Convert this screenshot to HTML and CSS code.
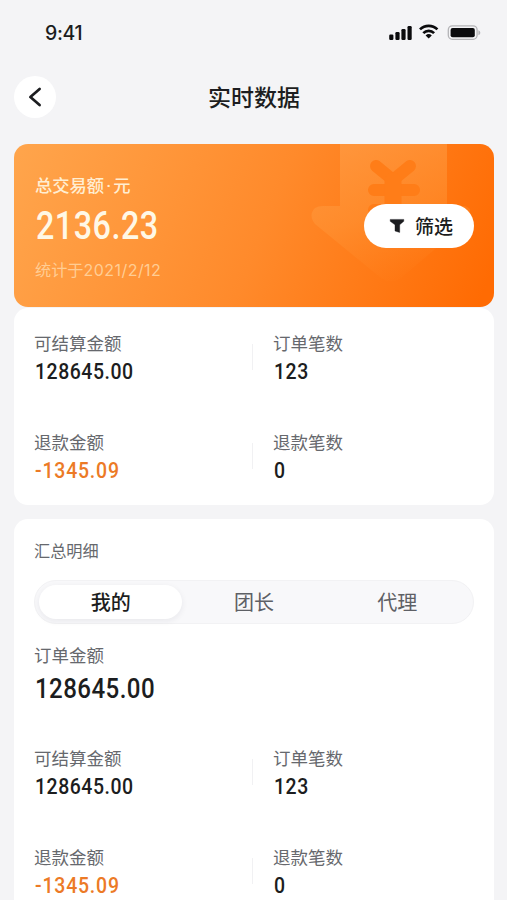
FILE: index.html
```html
<!DOCTYPE html>
<html lang="zh-CN">
<head>
<meta charset="utf-8">
<title>实时数据</title>
<link rel="stylesheet" href="styles.css">
</head>
<body>
<div class="screen">
  <div class="status">
    <span class="clock">9:41</span>
    <svg class="status-icons" width="92" height="20" viewBox="0 0 92 20">
      <rect x="0.2" y="11.5" width="4.2" height="5.5" rx="1.2"/>
      <rect x="6.4" y="9" width="4.2" height="8" rx="1.2"/>
      <rect x="12.4" y="6" width="4.2" height="11" rx="1.2"/>
      <rect x="18.5" y="3" width="4.2" height="14" rx="1.2"/>
      <g fill="none" stroke="#0b0b0d" stroke-width="2.7">
        <path d="M31 6.4a12.4 12.4 0 0 1 17.4 0"/>
        <path d="M34.3 10.1a7.7 7.7 0 0 1 10.8 0"/>
      </g>
      <path d="M39.7 15.4l-3.1-2.9a4.6 4.6 0 0 1 6.2 0z"/>
      <rect x="59.3" y="2.9" width="28.8" height="13.4" rx="4" fill="none" stroke="#b4b4b7" stroke-width="1.3"/>
      <rect x="61.6" y="5" width="24.2" height="9.3" rx="2"/>
      <path d="M89.4 7.2c2.5.9 2.5 4.1 0 5z" fill="#b4b4b7"/>
    </svg>
  </div>
  <header class="nav">
    <button class="back" aria-label="返回">
      <svg width="42" height="42" viewBox="0 0 42 42"><path d="M25.6 13l-9.2 8 9.2 8" fill="none" stroke="#1c1d20" stroke-width="2.7" stroke-linecap="round" stroke-linejoin="round"/></svg>
    </button>
    <h1>实时数据</h1>
  </header>

  <section class="hero">
    <svg class="hero-art" width="160" height="150" viewBox="0 0 160 150">
      <defs>
        <linearGradient id="arrow" x1="0.3" y1="0" x2="0.65" y2="1">
          <stop offset="0" stop-color="#ffa04a" stop-opacity=".6"/>
          <stop offset=".5" stop-color="#ff9638" stop-opacity=".5"/>
          <stop offset="1" stop-color="#ff8a28" stop-opacity="0"/>
        </linearGradient>
      </defs>
      <path fill="url(#arrow)" d="M30 0H137V62H155Q166 66 158 77L91 134Q81 141 71 134L5 80Q-2 71 5 64Q8 62 13 62H30Z"/>
      <g fill="none" stroke="#ff7d18" stroke-width="12" stroke-linecap="round">
        <path d="M66 22L83 36L100 22M64 46H104M64 66H104"/>
        <path d="M83 37V82" stroke-width="17"/>
      </g>
    </svg>
    <div class="hero-info">
      <div class="hero-label">总交易额<span>·</span>元</div>
      <div class="hero-amount num">2136.23</div>
      <div class="hero-date">统计于<span>2021/2/12</span></div>
    </div>
    <button class="filter">
      <svg width="16" height="16" viewBox="0 0 16 16"><path d="M1.2 1.4h13.6v1.9L10.7 6.8v7.6L6 13V6.8L1.2 3.3z" fill="#1c1d20" stroke="#1c1d20" stroke-width=".4" stroke-linejoin="round"/></svg>
      <span>筛选</span>
    </button>
  </section>

  <section class="card totals">
    <div class="row">
      <div class="cell"><div class="label">可结算金额</div><div class="value num">128645.00</div></div>
      <div class="cell split"><div class="label">订单笔数</div><div class="value num">123</div></div>
    </div>
    <div class="row">
      <div class="cell"><div class="label">退款金额</div><div class="value num refund">-1345.09</div></div>
      <div class="cell split"><div class="label">退款笔数</div><div class="value num">0</div></div>
    </div>
  </section>

  <section class="card details">
    <h2>汇总明细</h2>
    <nav class="tabs">
      <button class="tab active">我的</button>
      <button class="tab">团长</button>
      <button class="tab">代理</button>
    </nav>
    <div class="order">
      <div class="label">订单金额</div>
      <div class="order-amount num">128645.00</div>
    </div>
    <div class="row">
      <div class="cell"><div class="label">可结算金额</div><div class="value num">128645.00</div></div>
      <div class="cell split"><div class="label">订单笔数</div><div class="value num">123</div></div>
    </div>
    <div class="row">
      <div class="cell"><div class="label">退款金额</div><div class="value num refund">-1345.09</div></div>
      <div class="cell split"><div class="label">退款笔数</div><div class="value num">0</div></div>
    </div>
  </section>
</div>
</body>
</html>
```
FILE: styles.css
```css
* { box-sizing: border-box; margin: 0; padding: 0; }
body {
  background: #f4f4f6;
  color: #1c1d20;
  font-family: "Noto Sans CJK SC", sans-serif;
}
button { border: 0; font: inherit; color: inherit; }
.screen { height: 900px; overflow: hidden; padding: 0 13px 0 14px; }

.status {
  height: 66px;
  padding: 0 13px 0 31px;
  display: flex;
  align-items: center;
  justify-content: space-between;
}
.clock { font: 500 19.5px/24px Inter, sans-serif; letter-spacing: -.3px; }
.status-icons { fill: #0b0b0d; }

.nav {
  height: 78px;
  padding-top: 10px;
  display: grid;
  grid-template-columns: 42px 1fr 42px;
  align-items: start;
}
.back { width: 42px; height: 42px; border-radius: 50%; background: #fff; }
.back svg { display: block; }
.nav h1 { font-size: 23px; font-weight: 500; line-height: 41px; text-align: center; }

.num {
  font-family: Roboto, sans-serif;
  font-weight: 500;
  transform-origin: left center;
}

.hero {
  position: relative;
  height: 163px;
  padding: 0 20px 0 21px;
  border-radius: 14px;
  overflow: hidden;
  display: flex;
  align-items: center;
  justify-content: space-between;
  background: linear-gradient(112deg, #ffa54c 0%, #ff8a2b 52%, #ff6b03 97%);
  color: #fff8e6;
}
.hero-art { position: absolute; left: 296px; top: 0; }
.hero-info { align-self: flex-start; padding-top: 28px; }
.hero-label { font-size: 17.3px; font-weight: 500; line-height: 26px; color: #ffeed2; }
.hero-label span { display: inline-block; width: 9px; text-align: center; font-family: Roboto, sans-serif; }
.hero-amount { margin: 5px 0 0 1px; font-size: 38px; line-height: 44px; letter-spacing: .6px; transform: scaleX(.85); }
.hero-date { margin-top: 9px; font-size: 16.2px; line-height: 24px; color: #ffcd94; }
.hero-date span { font-family: Inter, sans-serif; font-size: 16px; letter-spacing: .45px; }
.filter {
  position: relative;
  width: 110px;
  height: 44px;
  padding-left: 4px;
  border-radius: 22px;
  background: #fff;
  color: #1c1d20;
  display: flex;
  align-items: center;
  justify-content: center;
  gap: 10px;
  font-size: 19px;
  font-weight: 500;
}

.card { background: #fff; border-radius: 14px; padding: 0 20px 0 20px; }
.totals { height: 197px; margin-top: 1px; padding-top: 22px; }
.details { height: 400px; margin-top: 14px; padding-top: 19px; }

.row { display: grid; grid-template-columns: 218px 1fr; height: 99px; }
.cell.split { position: relative; padding-left: 21px; }
.cell.split::before {
  content: "";
  position: absolute;
  left: 0;
  top: 14px;
  width: 1px;
  height: 26px;
  background: #f1f1f3;
}
.label { font-size: 17.5px; line-height: 26px; color: #66686d; }
.value { margin: 3px 0 0 1px; font-size: 21.6px; line-height: 26px; letter-spacing: .6px; transform: scaleX(.9); }
.refund { color: #ec7a26; letter-spacing: .9px; }

.details h2 { font-size: 16.2px; font-weight: 400; line-height: 24px; color: #66686d; }
.tabs {
  margin-top: 18px;
  height: 44px;
  padding: 4px;
  border: 1px solid #f2f2f4;
  border-radius: 22px;
  background: #f8f8fa;
  display: grid;
  grid-template-columns: repeat(3, 1fr);
}
.tab {
  border-radius: 18px;
  background: none;
  font-size: 20px;
  line-height: 34px;
  color: #5e6065;
}
.tab.active {
  background: #fff;
  color: #1c1d20;
  font-weight: 500;
  box-shadow: 0 2px 6px rgba(30, 30, 50, .07);
}
.order { height: 121px; padding-top: 18px; }
.order-amount { margin: 4px 0 0 1px; font-size: 28px; line-height: 34px; letter-spacing: .5px; transform: scaleX(.86); }
```
